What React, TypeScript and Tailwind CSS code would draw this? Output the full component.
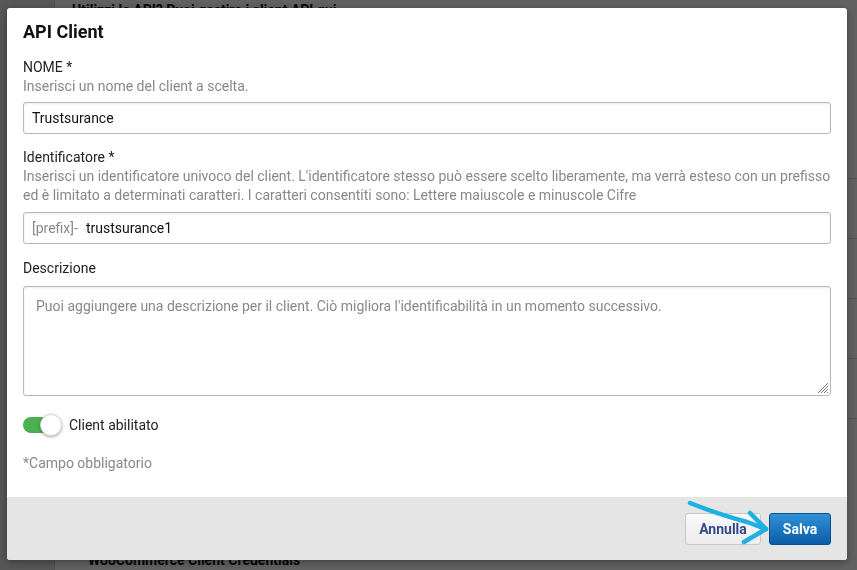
import { useState } from "react";

const rows = [0, 1, 2, 3, 4];

const Background = () => {
  return (
    <div className="flex h-[570px] w-full overflow-hidden bg-white">
      <div className="w-[55px] shrink-0 border-r border-[#cfcfcf] bg-[#e2e2e2]" />
      <div className="flex min-w-0 flex-1 flex-col">
        <h2 className="pl-[17px] text-[14px] font-bold leading-5 text-[#111]">
          Utilizzi le API? Puoi gestire i client API qui
        </h2>
        <div className="mt-[158px] flex flex-col">
          {rows.map((r) => (
            <div key={r} className="flex h-[60px] items-center border-t border-[#ddd]">
              <div className="ml-auto mr-[-40px] h-[6px] w-[40px] rounded-full bg-[#4caf50]" />
            </div>
          ))}
        </div>
        <h2 className="mt-[72px] pl-[33px] text-[14px] font-bold leading-5 text-[#111]">
          WooCommerce Client Credentials
        </h2>
      </div>
    </div>
  );
};

const Arrow = () => (
  <svg
    className="pointer-events-none absolute left-[680px] top-[495px]"
    width="100"
    height="60"
    viewBox="680 495 100 60"
    fill="none"
  >
    <path
      d="M690 503 Q 720 515 747 522 Q 758 526 766 529"
      stroke="#1fb0e2"
      strokeWidth="4.5"
      strokeLinecap="round"
    />
    <path
      d="M750 513 L 766 529 L 744 542"
      stroke="#1fb0e2"
      strokeWidth="4.5"
      strokeLinecap="round"
      strokeLinejoin="round"
    />
  </svg>
);

const App = () => {
  const [enabled, setEnabled] = useState(true);
  const [name, setName] = useState("Trustsurance");
  const [ident, setIdent] = useState("trustsurance1");

  return (
    <div className="relative h-[570px] w-full overflow-hidden font-['Roboto',sans-serif]">
      <Background />

      <div className="fixed inset-0 bg-black/[0.62] pl-[7px] pt-[8px]">
        <div className="flex w-[840px] flex-col overflow-hidden rounded-[3px] bg-white shadow-[0_2px_10px_rgba(0,0,0,0.35)]">
          <div className="flex flex-col px-4 pb-[24px] pt-[12px] text-[14px] leading-[19px] text-[#222]">
            <h1 className="text-[18px] font-bold leading-6 text-[#111]">API Client</h1>

            <label className="mt-[14px]">NOME *</label>
            <p className="text-[#888]">Inserisci un nome del client a scelta.</p>
            <input
              value={name}
              onChange={(e) => setName(e.target.value)}
              className="mt-[6px] h-[32px] rounded-[3px] border border-[#b8b8b8] px-2 text-[14px] text-[#111] shadow-[inset_0_1px_2px_rgba(0,0,0,0.08)] outline-none"
            />

            <label className="mt-[14px]">Identificatore *</label>
            <p className="text-[#888]">
              Inserisci un identificatore univoco del client. L'identificatore stesso può essere scelto
              liberamente, ma verrà esteso con un prefisso ed è limitato a determinati caratteri. I caratteri
              consentiti sono: Lettere maiuscole e minuscole Cifre
            </p>
            <div className="mt-[7px] flex h-[32px] items-center rounded-[3px] border border-[#b8b8b8] pl-2 shadow-[inset_0_1px_2px_rgba(0,0,0,0.08)]">
              <span className="text-[#888]">[prefix]-</span>
              <input
                value={ident}
                onChange={(e) => setIdent(e.target.value)}
                className="ml-[8px] flex-1 bg-transparent text-[14px] text-[#111] outline-none"
              />
            </div>

            <label className="mt-[15px]">Descrizione</label>
            <div className="relative mt-[8px]">
              <textarea
                placeholder="Puoi aggiungere una descrizione per il client. Ciò migliora l'identificabilità in un momento successivo."
                className="block h-[110px] w-full resize-none rounded-[3px] border border-[#b8b8b8] px-3 py-[10px] text-[14px] leading-[19px] text-[#111] shadow-[inset_0_1px_2px_rgba(0,0,0,0.08)] outline-none placeholder:text-[#888]"
              />
              <svg className="absolute bottom-[2px] right-[2px]" width="14" height="14" viewBox="0 0 14 14">
                <path d="M13 3 L3 13 M13 6 L6 13 M13 9 L9 13 M13 12 L12 13" stroke="#777" strokeWidth="1" />
              </svg>
            </div>

            <div className="mt-[17px] flex items-center">
              <button
                onClick={() => setEnabled(!enabled)}
                className="relative flex h-[24px] w-[40px] items-center"
              >
                <span className={`h-[16px] w-[36px] rounded-full ${enabled ? "bg-[#4caf50]" : "bg-[#bbb]"}`} />
                <span
                  className={`absolute top-[1px] h-[22px] w-[22px] rounded-full border border-[#ddd] bg-white shadow-[0_1px_3px_rgba(0,0,0,0.35)] ${
                    enabled ? "left-[17px]" : "left-0"
                  }`}
                />
              </button>
              <span className="ml-[6px] text-[#222]">Client abilitato</span>
            </div>

            <p className="mt-[17px] text-[#888]">*Campo obbligatorio</p>
          </div>

          <div className="flex h-[63px] items-start justify-end gap-2 bg-[#e5e5e5] px-4 pt-4">
            <button className="h-[32px] w-[76px] rounded-[3px] border border-[#c8c8c8] bg-gradient-to-b from-[#fafafa] to-[#ececec] text-[14px] font-bold text-[#34478a]">
              Annulla
            </button>
            <button className="h-[32px] w-[62px] rounded-[3px] border border-[#0a4f93] bg-gradient-to-b from-[#2e91d6] to-[#0b5da8] text-[14px] font-bold text-white">
              Salva
            </button>
          </div>
        </div>
        <Arrow />
      </div>
    </div>
  );
};

export default App;
